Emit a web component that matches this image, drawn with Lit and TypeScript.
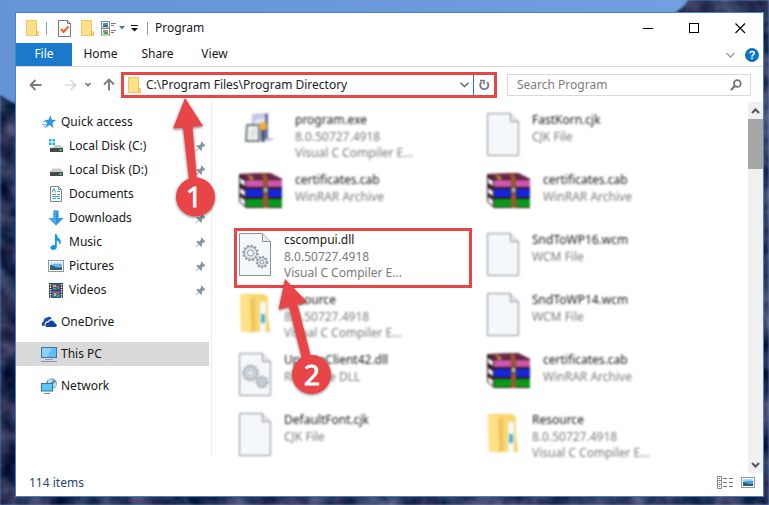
import { LitElement, html, svg, css, nothing } from "lit";
import { customElement, property } from "lit/decorators.js";
import { classMap } from "lit/directives/class-map.js";

const folderSmall = svg`
  <path d="M1 1H12V12L14 13V17H1Z" fill="#fbdc7e"/>
  <path d="M1 1H12V13L11 17H1Z" fill="#ffe08a"/>
  <path d="M1.500 1.500H11.500V12L13.500 13V16.500H1.500Z" fill="none" stroke="#eec764"/>
  <path d="M11.500 12V16.500" stroke="#e5b545"/>`;

const pageShape = svg`
  <path d="M.5 .5H23.500L31.500 8.500V42.500H.5Z" fill="#f5f8fa" stroke="#8b9298"/>
  <path d="M23.500 .5V8.500H31.500" fill="#e6eaed" stroke="#8b9298"/>`;

const screenSmall = svg`
  <rect x="1.500" y="1.500" width="13" height="10" fill="#fff" stroke="#8f979e"/>
  <rect x="3" y="3" width="10" height="7" fill="#4d9be0"/>
  <path d="M3 3H13V5Q8 4 3 6Z" fill="#a8d4f4"/>
  <path d="M3 6Q7 7 9 8L13 8V10H3Z" fill="#28636f"/>`;

const icons: Record<string, [number, number, unknown]> = {
  folder: [15, 18, folderSmall],
  check: [13, 17, svg`
    <path d="M.5 .5H9.500L12.500 3.500V16.500H.5Z" fill="#fafafa" stroke="#74787b"/>
    <path d="M9.500 .5V3.500H12.500" fill="none" stroke="#74787b"/>
    <path d="M3 9L5.500 12L10.500 6.500" fill="none" stroke="#ef6326" stroke-width="2"/>`],
  props: [16, 15, svg`
    <rect x=".5" y=".5" width="8" height="6.500" fill="#fff" stroke="#85898c"/>
    <rect x=".5" y="7.500" width="8" height="6.500" fill="#fff" stroke="#85898c"/>
    <path d="M2 2H7V4H2Z" fill="#3d94dd"/><path d="M2 4H7V6H2Z" fill="#37747c"/>
    <path d="M2 9H5V11H2Z" fill="#49a6d3"/><path d="M4 9H7V11H5Z" fill="#e6884d"/>
    <path d="M2 11H7V13H3Z" fill="#58a23b"/>
    <path d="M10 2.500H15M10 4.500H13M10 9.500H15M10 11.500H13" stroke="#777b7e"/>`],
  caret: [6, 4, svg`<path d="M0 0H6L3 3.500Z" fill="#3f77bd"/>`],
  more: [8, 7, svg`<path d="M0 .5H7" stroke="#111"/><path d="M0 3H7L3.500 6.500Z" fill="#111"/>`],
  min: [11, 11, svg`<path d="M0 5.500H10" stroke="#000"/>`],
  max: [11, 11, svg`<rect x=".5" y=".5" width="9" height="9" fill="none" stroke="#000"/>`],
  close: [11, 11, svg`<path d="M.5 .5L10 10M10 .5L.5 10" stroke="#000" stroke-width="1.100"/>`],
  expand: [9, 6, svg`<path d="M.5 1L4.500 5L8.500 1" fill="none" stroke="#9b9b9b" stroke-width="1.300"/>`],
  help: [14, 14, svg`
    <circle cx="7" cy="7" r="6.800" fill="#0a77d1"/>
    <circle cx="7" cy="7" r="6.300" fill="none" stroke="#0b5da8" stroke-width=".8"/>
    <path d="M4.900 5.300Q5 3.500 7 3.500Q9.200 3.500 9.200 5.200Q9.200 6.200 8 6.900Q7 7.500 7 8.700" fill="none" stroke="#fff" stroke-width="1.500"/>
    <rect x="6.200" y="9.500" width="1.700" height="1.600" fill="#fff"/>`],
  back: [14, 12, svg`<path d="M1.500 6H12.500M6.500 1L1.500 6L6.500 11" fill="none" stroke="#7c7c7c" stroke-width="1.800"/>`],
  forward: [14, 12, svg`<path d="M1.500 6H12M7.500 1L12.500 6L7.500 11" fill="none" stroke="#d9d9d9" stroke-width="1.700"/>`],
  history: [8, 6, svg`<path d="M1.500 1L4 3.500L6.500 1" fill="none" stroke="#777" stroke-width="1.700"/>`],
  up: [12, 13, svg`<path d="M6 1.500V12.500M1 6.500L6 1.500L11 6.500" fill="none" stroke="#7c7c7c" stroke-width="1.900"/>`],
  drop: [9, 6, svg`<path d="M.5 .7L4.500 4.700L8.500 .7" fill="none" stroke="#555" stroke-width="1.300"/>`],
  refresh: [11, 12, svg`
    <path d="M2.600 2.900A4.100 4.100 0 1 0 8.200 3.200" fill="none" stroke="#757575" stroke-width="1.800"/>
    <path d="M1 1.500H5V5.500" fill="none" stroke="#757575" stroke-width="1.500"/>`],
  search: [12, 12, svg`
    <circle cx="7.300" cy="4.500" r="3.400" fill="none" stroke="#707070" stroke-width="1.700"/>
    <path d="M4.700 7L1 11" stroke="#707070" stroke-width="2"/>`],
  star: [16, 16, svg`
    <path d="M9.500 1L10.600 5.500L15 6L11.500 9L12.500 14L8.500 11L4 14.200L6 9.200L3.500 6L7.500 5.800Z" fill="#2b97e0"/>
    <path d="M2 7.500H5M1 10.500H5M2.500 13L4 12" stroke="#7bbdec" stroke-width="1.200"/>`],
  diskC: [16, 16, svg`
    <path d="M1 1H3.500V3.500H1ZM4.500 1H7V3.500H4.500ZM1 4.500H3.500V7H1ZM4.500 4.500H7V7H4.500Z" fill="#13b5ea"/>
    <path d="M5 9L7 7H12L15 9.500V10H3Z" fill="#c5c8ca"/>
    <rect x="2" y="10" width="13" height="4" fill="#464a4c"/>
    <rect x="11.500" y="11" width="2" height="2" fill="#3fe14c"/>`],
  diskD: [16, 16, svg`
    <path d="M4.500 6.500H12.500L15 9.500V10H2V9.500Z" fill="#c9cccd"/>
    <rect x="2" y="10" width="13" height="4" fill="#464a4c"/>
    <rect x="11.500" y="11" width="2" height="2" fill="#3fe14c"/>`],
  documents: [16, 16, svg`
    <path d="M2.500 .5H10.500L13.500 3.500V15.500H2.500Z" fill="#fff" stroke="#7f8790"/>
    <path d="M10.500 .5V3.500H13.500" fill="none" stroke="#7f8790"/>
    <path d="M4 6.500L6 2.500L7.500 6.500" fill="none" stroke="#3d8fca"/>
    <path d="M9 5.500H12M4 8.500H8M9 8.500H12M4 10.500H12M4 12.500H8M9 12.500H12" stroke="#4c9bcd"/>`],
  downloads: [16, 16, svg`
    <path d="M5.500 .5H10.500V8H15.500L8 15.500L.5 8H5.500Z" fill="#2f93e0"/>
    <path d="M5.500 .5H8V15L.5 8H5.500Z" fill="#47a5ec"/>`],
  music: [16, 16, svg`
    <path d="M7 0H8.500Q9 3.500 12 5.500Q14 8 11.500 11Q12 7.500 8.800 6.500V13Q8.500 16 5 16Q2 15.500 2.500 13Q3.500 10.500 7 11.200Z" fill="#0a9bea"/>`],
  pictures: [16, 16, svg`
    <rect x=".5" y="2.500" width="15" height="11" fill="#fff" stroke="#8f979e"/>
    <rect x="2" y="4" width="12" height="8" fill="#69b2e8"/>
    <path d="M2 4H14V6Q8 5 2 7Z" fill="#c8e6f8"/>
    <path d="M2 7Q7 8 9 9.500L14 9.500V12H2Z" fill="#28636f"/>`],
  videos: [16, 16, svg`
    <rect x="1" y="1" width="14" height="15" fill="#39393d"/>
    <rect x="4" y="1.500" width="8" height="6.500" fill="#2d5ca6"/>
    <rect x="4" y="9" width="8" height="6.500" fill="#3b6fc0"/>
    <path d="M2.500 2V16M13.500 2V16" stroke="#eee" stroke-width="1.400" stroke-dasharray="1.500 1"/>
    <path d="M5 3H8V5H5ZM6 11H8V14H6Z" fill="#e1b438"/><path d="M8 4H11V7H9ZM8 10H10V12H8Z" fill="#cf4b38"/>
    <path d="M5 6H8V7.500H5ZM9 13H11V15H9Z" fill="#49a55c"/>`],
  onedrive: [16, 16, svg`
    <path d="M3.500 12H1.500Q-.5 9 2.500 7.500Q2.500 4 6 3.500Q9 1.500 11 5Q8 4.800 7 7.200Q3.500 7 3.500 12Z" fill="#1b4fa8"/>
    <path d="M5.500 13Q3.500 11.500 5 9.500Q6 8.200 7.500 8.500Q9 5.500 12 6.800Q13.500 7.500 13.500 9Q16 9.500 15.800 11.500Q15.500 13 14 13Z" fill="#0f47a3"/>`],
  pc: [16, 16, svg`
    <rect x=".5" y="1.500" width="15" height="10" fill="#5cc0f8" stroke="#44748f"/>
    <path d="M1 2H11L6 11H1Z" fill="#86d3fd"/>
    <path d="M4 13.500H12" stroke="#8aa0b3"/><path d="M0 15.500H16" stroke="#7c93bb"/>`],
  network: [16, 16, svg`
    <circle cx="10.500" cy="5.500" r="5.300" fill="#5f98b5"/>
    <path d="M7 2Q10 0 12 2L10 5L7 6ZM12 6L15 4V8L12 10Z" fill="#b7dfea"/>
    <rect x=".5" y="5.500" width="11" height="7.500" fill="#5cc5fb" stroke="#33718f"/>
    <path d="M3 15.500H9" stroke="#6a8497"/>`],
  pin: [11, 11, svg`
    <path d="M6.500 .5L10.500 4.500L9.300 5.300L8.800 4.900L6.800 7L7 9.200L6.200 9.700L3.900 7.400L.8 10.500L.4 10.200L3.300 6.900L1.300 4.700L2 4L4.300 4.200L6.300 2.200L5.800 1.500Z" fill="#8795a1"/>`],
  upArrow: [9, 6, svg`<path d="M1 5L4.500 1.500L8 5" fill="none" stroke="#555" stroke-width="2"/>`],
  downArrow: [9, 6, svg`<path d="M1 1L4.500 4.500L8 1" fill="none" stroke="#555" stroke-width="2"/>`],
  details: [16, 13, svg`
    <path d="M.5 .5H4.500V12.500H.5ZM.5 4.500H4.500M.5 8.500H4.500" fill="none" stroke="#84888b"/>
    <rect x="2" y="2" width="1" height="1" fill="#555"/><rect x="2" y="6" width="1" height="1" fill="#27a"/>
    <rect x="2" y="10" width="1" height="1" fill="#c33"/>
    <path d="M6 2.500H10M12 2.500H16M6 6.500H10M12 6.500H16M6 10.500H10M12 10.500H16" stroke="#777"/>`],
  large: [16, 13, screenSmall],
  page: [32, 43, pageShape],
  dll: [32, 43, svg`${pageShape}
    <circle cx="11.500" cy="20" r="7.300" fill="none" stroke="#929da6" stroke-width="2" stroke-dasharray="2.200 1.600"/>
    <circle cx="11.500" cy="20" r="6.300" fill="#dce4e9" stroke="#929da6"/>
    <circle cx="11.500" cy="20" r="3" fill="#f5f8fa" stroke="#929da6"/>
    <circle cx="23" cy="29" r="5.300" fill="none" stroke="#929da6" stroke-width="2" stroke-dasharray="2 1.500"/>
    <circle cx="23" cy="29" r="4.400" fill="#dce4e9" stroke="#929da6"/>
    <circle cx="23" cy="29" r="1.800" fill="#f5f8fa" stroke="#929da6"/>`],
  resource: [32, 43, svg`
    <path d="M1 1H25L29 4V37L31 39H2Z" fill="#f8d671"/>
    <path d="M1 1L13 5V40L2 38Z" fill="#ffe18a"/>
    <path d="M11 6L16 4V38L12 40Z" fill="#edc55b"/>
    <path d="M21 9H27V39H21Z" fill="#f4f8fa"/><path d="M22 21H26V30H22Z" fill="#55aed2"/>
    <path d="M28 18L31 38L27 39Z" fill="#f5cd5f"/>`],
  rar: [43, 43, svg`
    <path d="M0 1L31 0L43 6V35H7L0 29Z" fill="#331a22"/>
    <path d="M0 1L31 0L43 6H7Z" fill="#6b2746"/>
    <path d="M7 7H43V14H7Z" fill="#cf55ae"/><path d="M7 16H43V24H7Z" fill="#1525dd"/>
    <path d="M7 26H43V34H7Z" fill="#0a9a1b"/>
    <path d="M1 5L6 8V13L1 10ZM1 15L6 18V23L1 20ZM1 24L6 27V33L1 29Z" fill="#eef0f4"/>
    <path d="M23 1H27L29 7V35H24V7Z" fill="#98562f"/>
    <path d="M8 1L15 5L12 7Z" fill="#c8ac26"/>
    <rect x="24" y="14" width="5" height="6" fill="#bdb7a3" stroke="#3b2b20"/>`],
  exe: [43, 43, svg`
    <path d="M13 1L29 0V25L12 28Z" fill="#c3c7ed"/>
    <path d="M26 1L29 0V25L26 27Z" fill="#696da5"/>
    <path d="M16 7L26 5V14L16 15Z" fill="#e8eafa"/>
    <path d="M8 12H20V28H7Z" fill="#f5f8f6" stroke="#6f7a77" stroke-width="2"/>
    <path d="M11 17L18 14L17 24L11 25Z" fill="#dfe4e3"/>
    <circle cx="24" cy="13" r="4" fill="#eeae38"/>
    <path d="M24 17V29" stroke="#353e54" stroke-width="3"/>
    <path d="M25 27L34 26" stroke="#b4b8cc" stroke-width="2"/>`],
};

const icon = (name: string) => {
  const [w, h, body] = icons[name];
  return html`<svg class="icon" width=${w} height=${h} viewBox="0 0 ${w} ${h}" aria-hidden="true">${body}</svg>`;
};

const iconStyles = css`
  * { box-sizing: border-box; }
  .icon { display: block; flex: none; }
  button { font: inherit; color: inherit; border: 0; padding: 0; background: none; display: flex; align-items: center; justify-content: center; }
`;

interface NavEntry { icon: string; label: string; child?: boolean; gap?: boolean; selected?: boolean; }
const navEntries: NavEntry[] = [
  { icon: "star", label: "Quick access" },
  { icon: "diskC", label: "Local Disk (C:)", child: true },
  { icon: "diskD", label: "Local Disk (D:)", child: true },
  { icon: "documents", label: "Documents", child: true },
  { icon: "downloads", label: "Downloads", child: true },
  { icon: "music", label: "Music", child: true },
  { icon: "pictures", label: "Pictures", child: true },
  { icon: "videos", label: "Videos", child: true },
  { icon: "onedrive", label: "OneDrive", gap: true },
  { icon: "pc", label: "This PC", gap: true, selected: true },
  { icon: "network", label: "Network", gap: true },
];

interface FileEntry { icon: string; name: string; lines: string[]; marked?: boolean; }
const version = ["8.0.50727.4918", "Visual C Compiler E..."];
const files: FileEntry[] = [
  { icon: "exe", name: "program.exe", lines: version },
  { icon: "page", name: "FastKorn.cjk", lines: ["CJK File"] },
  { icon: "rar", name: "certificates.cab", lines: ["WinRAR Archive"] },
  { icon: "rar", name: "certificates.cab", lines: ["WinRAR Archive"] },
  { icon: "dll", name: "cscompui.dll", lines: version, marked: true },
  { icon: "page", name: "SndToWP16.wcm", lines: ["WCM File"] },
  { icon: "resource", name: "Resource", lines: version },
  { icon: "page", name: "SndToWP14.wcm", lines: ["WCM File"] },
  { icon: "dll", name: "UpdateClient42.dll", lines: ["Resource DLL"] },
  { icon: "rar", name: "certificates.cab", lines: ["WinRAR Archive"] },
  { icon: "page", name: "DefaultFont.cjk", lines: ["CJK File"] },
  { icon: "resource", name: "Resource", lines: version },
];

@customElement("nav-pane")
export class NavPane extends LitElement {
  static styles = [iconStyles, css`
    :host { display: block; width: 196px; flex: none; padding-top: 8px; margin-bottom: 16px; border-right: 1px solid #ececec; }
    ul { list-style: none; margin: 0; padding: 0; }
    .entry { display: flex; align-items: center; height: 24px; gap: 4px; padding: 0 3px 0 25px; margin-right: 2px; color: #151515; text-decoration: none; }
    .child { padding-left: 32px; gap: 5px; }
    .label { flex: 1; white-space: nowrap; }
    .gap { margin-top: 8px; }
    .selected { background: #d9d9d9; }
  `];
  render() {
    return html`<nav aria-label="Folders"><ul>${navEntries.map((n) => html`
      <li><a href="#" class=${classMap({ entry: true, child: !!n.child, gap: !!n.gap, selected: !!n.selected })}>
        ${icon(n.icon)}<span class="label">${n.label}</span>${n.child ? icon("pin") : nothing}
      </a></li>`)}</ul></nav>`;
  }
}

@customElement("file-tile")
export class FileTile extends LitElement {
  @property({ attribute: false }) file!: FileEntry;
  static styles = [iconStyles, css`
    :host { display: block; min-width: 0; }
    .tile { width: 100%; height: 60px; align-items: flex-start; justify-content: flex-start; gap: 13px; padding: 3px 5px; text-align: left; filter: blur(1px); }
    .marked { filter: none; padding: 0 2px; border: 3px solid #e84549; }
    .icon { margin-top: 2px; }
    .text { display: flex; flex-direction: column; line-height: 16px; white-space: nowrap; color: #7a7a7a; }
    .name { color: #151515; line-height: 18px; }
  `];
  render() {
    const f = this.file;
    return html`<button class=${classMap({ tile: true, marked: !!f.marked })}>
      ${icon(f.icon)}
      <span class="text"><span class="name">${f.name}</span>${f.lines.map((l) => html`<span>${l}</span>`)}</span>
    </button>`;
  }
}

@customElement("app-root")
export class AppRoot extends LitElement {
  static styles = [iconStyles, css`
    :host { display: flex; position: relative; min-height: 100vh; padding: 12px 5px 8px 15px; overflow: hidden; box-sizing: border-box;
      font: 12px/16px "Noto Sans", "Open Sans", sans-serif; color: #151515; }
    .desktop { position: absolute; inset: 0; width: 100%; height: 100%; }
    .window { position: relative; flex: 1; min-width: 0; display: flex; flex-direction: column; background: #fff; border: 1px solid #4483ca; }
    .title-bar { display: flex; align-items: center; height: 30px; padding-left: 9px; }
    .quick { display: flex; align-items: center; }
    .sep { width: 1px; height: 13px; background: #999; margin: 0 11px 0 6px; }
    .sep-end { margin: 0 7px 0 8px; }
    .gap-9 { margin-right: 9px; }
    .gap-6 { margin-right: 6px; }
    .gap-2 { margin-right: 2px; }
    h1 { font-size: 12px; font-weight: 400; margin: 0; flex: 1; }
    .controls { display: flex; }
    .controls button { width: 46px; height: 30px; }
    .tabs { display: flex; height: 24px; border-bottom: 1px solid #dadada; padding-right: 3px; align-items: stretch; }
    .tab { width: 57px; padding-bottom: 1px; }
    .file { width: 56px; color: #fff; background: #1979ca; }
    .spring { flex: 1; }
    .expand { width: 22px; }
    .help { width: 16px; margin-left: 3px; }
    .toolbar { display: flex; align-items: center; height: 35px; padding: 0 12px 0 13px; }
    .arrows { display: flex; align-items: center; width: 92px; gap: 20px; flex: none; }
    .history { margin: 0 -9px 0 -13px; }
    .address { flex: 1 1 376px; min-width: 0; height: 26px; border: 3px solid #e84549; display: flex; align-items: center; padding-left: 3px; }
    .address label { margin-right: 4px; }
    input { font: inherit; color: #222; border: 0; outline: 0; background: none; padding: 0; margin: 0; min-width: 0; flex: 1; }
    input::placeholder { color: #7c7c7c; opacity: 1; }
    .drop { width: 18px; }
    .refresh { width: 21px; height: 20px; border-left: 1px solid #1979ca; }
    .search { flex: 1 1 244px; min-width: 0; height: 22px; margin-left: 10px; border: 1px solid #d9d9d9; display: flex; align-items: center; padding: 0 8px 0 9px; }
    .body { display: flex; flex: 1; }
    .files { flex: 1; min-width: 0; display: grid; grid-template-columns: repeat(2, minmax(0, 238px)); gap: 0 10px; align-content: start; padding: 6px 26px 2px 22px; }
    .scroll { width: 15px; flex: none; background: #f0f0f0; display: flex; flex-direction: column; }
    .scroll button { height: 17px; }
    .thumb { height: 50px; background: #a6a6a6; }
    .status { display: flex; align-items: center; height: 23px; padding: 0 7px 4px 13px; color: #29466a; gap: 7px; }
    .status span { flex: 1; }
    .marks { position: absolute; left: 156px; top: 84px; pointer-events: none; }
    .digit { font: 28px/28px "Open Sans", sans-serif; fill: #fff; stroke: #fff; text-anchor: middle; }
  `];

  private desktop() {
    return html`<svg class="desktop" viewBox="0 0 769 505" preserveAspectRatio="none" aria-hidden="true">
      <defs>
        <linearGradient id="sky" x1="0" y1="0" x2="1" y2="0"><stop offset="0" stop-color="#6493d6"/><stop offset=".9" stop-color="#719fdf"/></linearGradient>
        <filter id="rock" x="0" y="0" width="100%" height="100%" color-interpolation-filters="sRGB">
          <feTurbulence type="fractalNoise" baseFrequency=".045" numOctaves="4" seed="6"/>
          <feColorMatrix values=".6 0 0 0 -.13  .5 .15 0 0 -.12  .5 .1 0 0 .04  0 0 0 0 1"/>
          <feComposite in2="SourceGraphic" operator="in"/>
          <feGaussianBlur stdDeviation=".8"/>
        </filter>
      </defs>
      <rect width="769" height="505" fill="url(#sky)"/>
      <path filter="url(#rock)" d="M0 95L10 101L20 106V480H755V20L674 14L684 6L688 0H769V505H0Z" fill="#242d52"/>
    </svg>`;
  }

  render() {
    return html`
      ${this.desktop()}
      <main class="window">
        <header class="title-bar">
          <div class="quick">
            ${icon("folder")}<i class="sep"></i>
            <button class="gap-9" aria-label="Properties">${icon("check")}</button>
            <button class="gap-6" aria-label="New folder">${icon("folder")}</button>
            <button class="gap-2" aria-label="View">${icon("props")}</button>
            <button class="gap-6" aria-label="View options">${icon("caret")}</button>
            <button aria-label="Customize">${icon("more")}</button>
            <i class="sep sep-end"></i>
          </div>
          <h1>Program</h1>
          <div class="controls">
            <button aria-label="Minimize">${icon("min")}</button>
            <button aria-label="Maximize">${icon("max")}</button>
            <button aria-label="Close">${icon("close")}</button>
          </div>
        </header>
        <nav class="tabs" aria-label="Ribbon">
          <button class="tab file">File</button>
          <button class="tab">Home</button>
          <button class="tab">Share</button>
          <button class="tab">View</button>
          <span class="spring"></span>
          <button class="expand" aria-label="Expand ribbon">${icon("expand")}</button>
          <button class="help" aria-label="Help">${icon("help")}</button>
        </nav>
        <div class="toolbar">
          <div class="arrows">
            <button aria-label="Back">${icon("back")}</button>
            <button aria-label="Forward">${icon("forward")}</button>
            <button class="history" aria-label="Recent">${icon("history")}</button>
            <button aria-label="Up">${icon("up")}</button>
          </div>
          <div class="address">
            <label for="path" aria-label="Address">${icon("folder")}</label>
            <input id="path" .value=${"C:\\Program Files\\Program Directory"}>
            <button class="drop" aria-label="Previous locations">${icon("drop")}</button>
            <button class="refresh" aria-label="Refresh">${icon("refresh")}</button>
          </div>
          <div class="search">
            <input id="find" placeholder="Search Program">
            <label for="find" aria-label="Search">${icon("search")}</label>
          </div>
        </div>
        <div class="body">
          <nav-pane></nav-pane>
          <section class="files" aria-label="Files">
            ${files.map((f) => html`<file-tile .file=${f}></file-tile>`)}
          </section>
          <div class="scroll">
            <button aria-label="Scroll up">${icon("upArrow")}</button>
            <div class="thumb"></div>
            <span class="spring"></span>
            <button aria-label="Scroll down">${icon("downArrow")}</button>
          </div>
        </div>
        <footer class="status">
          <span>114 items</span>
          <button aria-label="Details view">${icon("details")}</button>
          <button aria-label="Large icons view">${icon("large")}</button>
        </footer>
        <svg class="marks" width="170" height="310" viewBox="172 97 170 310">
          <defs><filter id="shade" x="-20%" y="-20%" width="140%" height="140%"><feDropShadow dx="0" dy="1" stdDeviation="1.500" flood-color="#000" flood-opacity=".55"/></filter></defs>
          <g fill="#e84549" filter="url(#shade)">
            <path d="M185 98L203 126L192.500 127L197 180H189L183 128L173 128.500Z"/>
            <circle cx="195.500" cy="197" r="19.500"/>
            <path d="M285 279L307 302L297.500 304.500L311 357L302 359L289 307L278.500 309.500Z"/>
            <circle cx="311.500" cy="374.500" r="19.500"/>
          </g>
          <text class="digit" x="194" y="207">1</text>
          <text class="digit" x="312" y="385">2</text>
        </svg>
      </main>`;
  }
}
